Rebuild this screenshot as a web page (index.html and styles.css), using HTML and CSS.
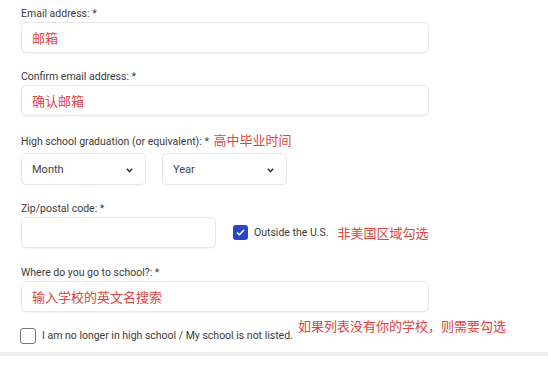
FILE: index.html
```html
<!DOCTYPE html>
<html lang="en">
<head>
<meta charset="utf-8">
<title>Form</title>
<link rel="stylesheet" href="styles.css">
</head>
<body>
<div class="form">
  <div class="field">
    <div class="label">Email address: *</div>
    <div class="input wide"><span class="note">邮箱</span></div>
  </div>
  <div class="field">
    <div class="label">Confirm email address: *</div>
    <div class="input wide"><span class="note">确认邮箱</span></div>
  </div>
  <div class="field field-grad">
    <div class="label label-grad">High school graduation (or equivalent): * <span class="note note-label">高中毕业时间</span></div>
    <div class="selects">
      <div class="select">
        <span>Month</span>
        <svg class="chev" width="7" height="5" viewBox="0 0 7 5"><polyline points="0.8,0.8 3.5,3.6 6.2,0.8" fill="none" stroke="#333" stroke-width="1.5"/></svg>
      </div>
      <div class="select">
        <span>Year</span>
        <svg class="chev" width="7" height="5" viewBox="0 0 7 5"><polyline points="0.8,0.8 3.5,3.6 6.2,0.8" fill="none" stroke="#333" stroke-width="1.5"/></svg>
      </div>
    </div>
  </div>
  <div class="field field-zip">
    <div class="label">Zip/postal code: *</div>
    <div class="zip-row">
      <div class="input zip"></div>
      <div class="check-item">
        <span class="box checked"><svg width="9" height="7" viewBox="0 0 9 7"><polyline points="1,3.6 3.4,5.8 8,1" fill="none" stroke="#fff" stroke-width="1.5"/></svg></span>
        <span class="check-text">Outside the U.S.</span>
        <span class="note note-inline">非美国区域勾选</span>
      </div>
    </div>
  </div>
  <div class="field field-school">
    <div class="label">Where do you go to school?: *</div>
    <div class="input wide"><span class="note">输入学校的英文名搜索</span></div>
  </div>
  <div class="school-row">
    <span class="box"></span>
    <span class="check-text">I am no longer in high school / My school is not listed.</span>
    <span class="note note-raised">如果列表没有你的学校，则需要勾选</span>
  </div>
</div>
<div class="divider"></div>
</body>
</html>
```
FILE: styles.css
```css
html, body {
  margin: 0;
  padding: 0;
  background: #ffffff;
}
body {
  font-family: Roboto, "Noto Sans CJK SC", sans-serif;
  color: #333;
  width: 548px;
  height: 365px;
  overflow: hidden;
}
.form {
  padding: 5px 0 0 21px;
}
.field {
  margin-bottom: 15px;
}
.label {
  font-size: 10.5px;
  line-height: 14px;
  height: 14px;
  padding-top: 2px;
  margin-bottom: 1px;
  color: #3a3a3a;
  white-space: nowrap;
}
.note {
  font-family: "Noto Sans CJK SC", sans-serif;
  color: #e0443e;
  font-size: 13px;
}
.input {
  box-sizing: border-box;
  height: 31px;
  border: 1px solid #e7e7e7;
  border-radius: 5px;
  box-shadow: 0 1px 1px rgba(0,0,0,0.03);
  display: flex;
  align-items: center;
  padding-left: 10px;
  background: #fff;
}
.wide {
  width: 408px;
}
.label-grad {
  margin-bottom: 6px;
}
.note-label {
  margin-left: 2px;
  line-height: 14px;
}
.selects {
  display: flex;
  gap: 16px;
}
.select {
  box-sizing: border-box;
  width: 125px;
  height: 32px;
  border: 1px solid #e7e7e7;
  border-radius: 5px;
  box-shadow: 0 1px 1px rgba(0,0,0,0.03);
  display: flex;
  align-items: center;
  justify-content: space-between;
  padding: 0 12px 0 10px;
  font-size: 11px;
  color: #444;
}
.chev {
  margin-top: 3px;
}
.field-zip {
  margin-bottom: 16px;
}
.zip-row {
  display: flex;
  align-items: center;
}
.zip {
  width: 195px;
}
.check-item {
  display: flex;
  align-items: center;
  margin-left: 17px;
}
.box {
  box-sizing: border-box;
  width: 16px;
  height: 16px;
  border: 1.5px solid #7a7a7a;
  border-radius: 3px;
  display: flex;
  align-items: center;
  justify-content: center;
  flex: none;
}
.box.checked {
  width: 15px;
  height: 15px;
  background: #2b46c3;
  border: none;
}
.check-text {
  font-size: 10.5px;
  color: #3a3a3a;
  margin-left: 6px;
  white-space: nowrap;
}
.note-inline {
  margin-left: 9px;
}
.field-school {
  margin-bottom: 6px;
}
.school-row {
  display: flex;
  align-items: flex-end;
  height: 28px;
  margin-left: -1px;
}
.school-row .box {
  margin-bottom: 2px;
}
.school-row .check-text {
  line-height: 16px;
  margin-bottom: 2px;
}
.note-raised {
  align-self: flex-start;
  line-height: 16px;
  margin-left: 5px;
  white-space: nowrap;
}
.divider {
  margin-top: 6px;
  height: 4px;
  background: #eeeeee;
  width: 548px;
}
```
